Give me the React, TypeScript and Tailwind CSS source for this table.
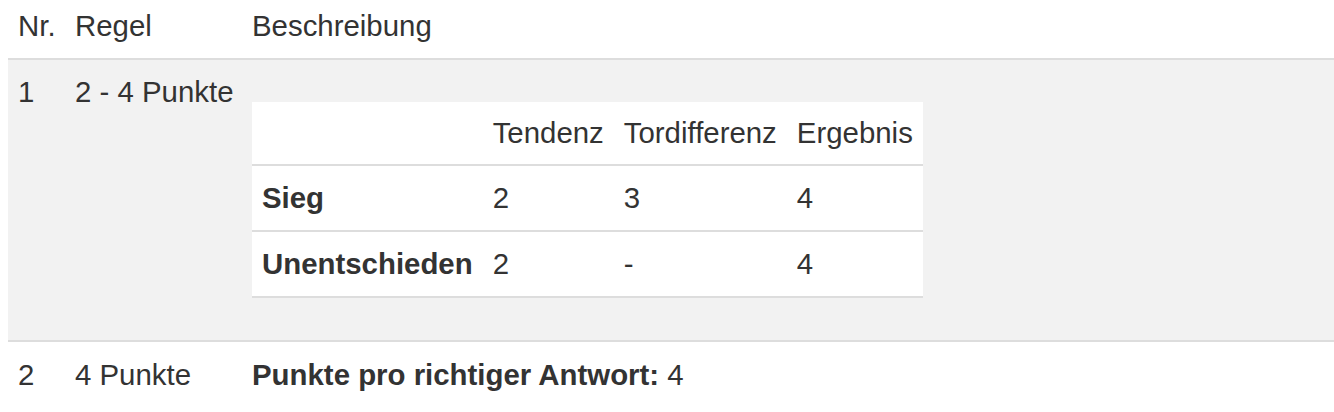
const scores = [
  { label: "Sieg", tendenz: "2", diff: "3", result: "4" },
  { label: "Unentschieden", tendenz: "2", diff: "-", result: "4" },
];

const ScoreTable = () => {
  return (
    <table className="my-[26px] border-collapse bg-white">
      <thead>
        <tr className="border-b-2 border-[#dddddd]">
          <th className="px-[10px] pt-[15px] pb-[15px] text-left font-normal"></th>
          <th className="px-[10px] pt-[15px] pb-[15px] text-left font-normal">Tendenz</th>
          <th className="px-[10px] pt-[15px] pb-[15px] text-left font-normal">Tordifferenz</th>
          <th className="px-[10px] pt-[15px] pb-[15px] text-left font-normal">Ergebnis</th>
        </tr>
      </thead>
      <tbody>
        {scores.map((s) => (
          <tr key={s.label} className="border-b-2 border-[#dddddd]">
            <td className="px-[10px] py-4 font-bold">{s.label}</td>
            <td className="px-[10px] py-4">{s.tendenz}</td>
            <td className="px-[10px] py-4">{s.diff}</td>
            <td className="px-[10px] py-4">{s.result}</td>
          </tr>
        ))}
      </tbody>
    </table>
  );
};

const App = () => {
  return (
    <div className="h-[412px] overflow-hidden bg-white pl-2 font-['Liberation_Sans',Arial,sans-serif] text-[29.4px] leading-[32px] text-[#333333]">
      <table className="w-full table-fixed border-collapse">
        <colgroup>
          <col className="w-[57px]" />
          <col className="w-[177px]" />
          <col />
        </colgroup>
        <thead>
          <tr className="border-b-2 border-[#dddddd]">
            <th className="px-[10px] pt-[10px] pb-4 text-left font-normal">Nr.</th>
            <th className="px-[10px] pt-[10px] pb-4 text-left font-normal">Regel</th>
            <th className="px-[10px] pt-[10px] pb-4 text-left font-normal">Beschreibung</th>
          </tr>
        </thead>
        <tbody>
          <tr className="border-b-2 border-[#dddddd] bg-[#f2f2f2] align-top">
            <td className="px-[10px] py-4">1</td>
            <td className="whitespace-nowrap px-[10px] py-4">2 - 4 Punkte</td>
            <td className="px-[10px] py-4">
              <ScoreTable />
            </td>
          </tr>
          <tr className="align-top">
            <td className="px-[10px] pt-[17px] pb-4">2</td>
            <td className="whitespace-nowrap px-[10px] pt-[17px] pb-4">4 Punkte</td>
            <td className="px-[10px] pt-[17px] pb-4">
              <span className="font-bold">Punkte pro richtiger Antwort:</span> 4
            </td>
          </tr>
        </tbody>
      </table>
    </div>
  );
};

export default App;
